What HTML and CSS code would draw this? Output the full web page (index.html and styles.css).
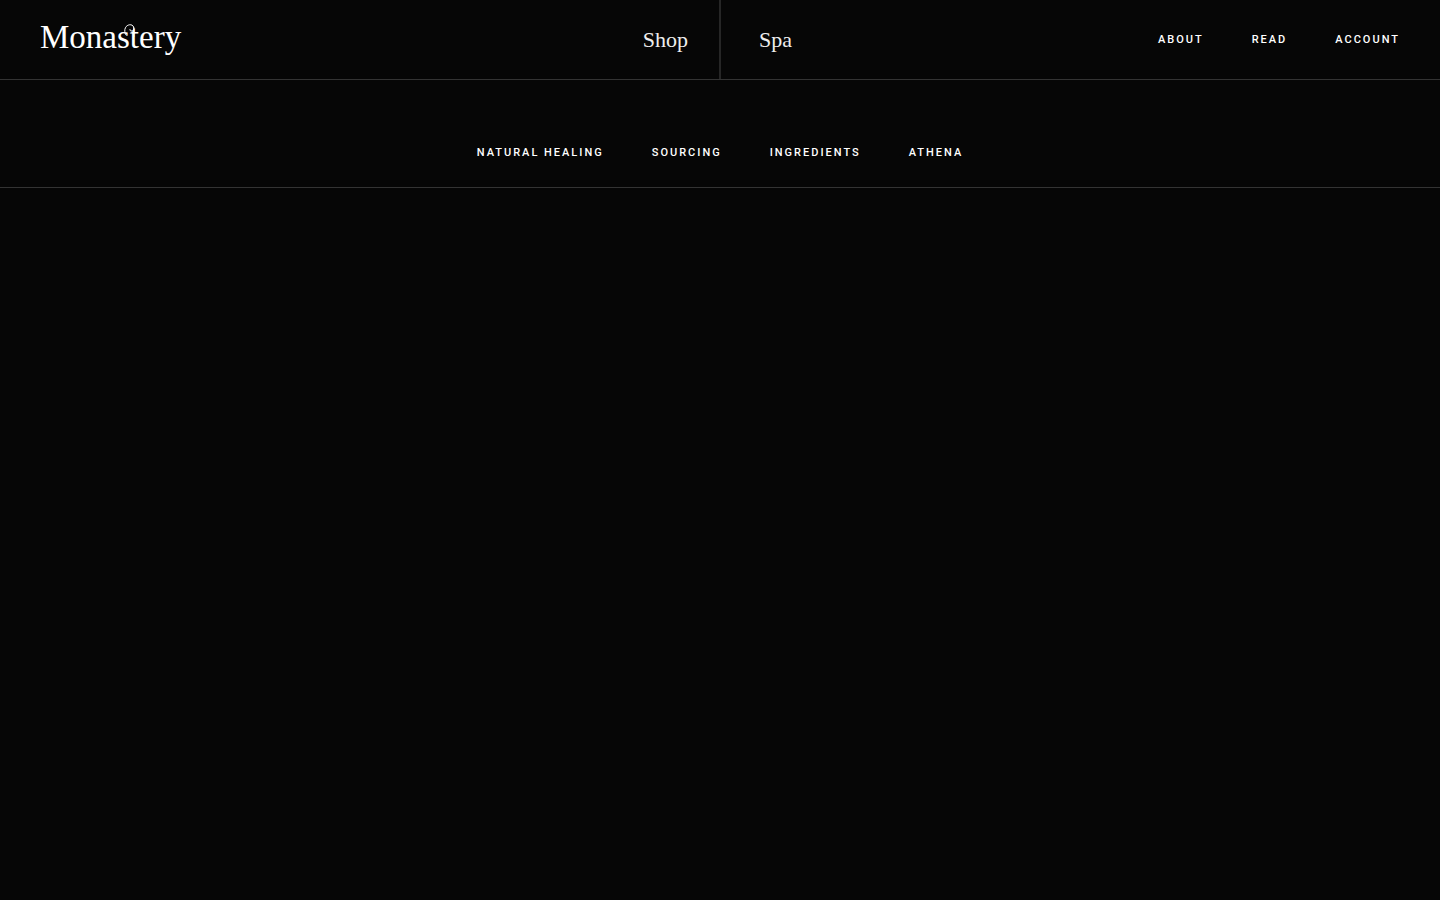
FILE: index.html
```html
<!DOCTYPE html>
<html lang="en">
<head>
    <meta charset="UTF-8">
    <meta name="viewport" content="width=device-width, initial-scale=1.0">
    <title>Monastery</title>
    <link rel="stylesheet" href="styles.css">
</head>
<body>
    <header class="header">
        <div class="half half-left">
            <a class="logo" href="#">Monastery
                <svg class="logo-loop" width="14" height="16" viewBox="0 0 14 16" aria-hidden="true">
                    <path d="M2.4 11.5C0.6 9.5 0.3 6 1.4 3.8C3 0.2 8.4 -0.4 9.6 3C10.4 5.4 9 7.4 7 7C5.8 6.7 5.6 5.5 6.4 5M9.8 3.4V13" fill="none" stroke="currentColor" stroke-width="1"/>
                </svg>
            </a>
            <a class="main-link" href="#">Shop</a>
        </div>
        <div class="half half-right">
            <a class="main-link" href="#">Spa</a>
            <nav class="links">
                <a href="#">ABOUT</a>
                <a href="#">READ</a>
                <a href="#">ACCOUNT</a>
            </nav>
        </div>
    </header>
    <nav class="links sub-nav">
        <a href="#">NATURAL HEALING</a>
        <a href="#">SOURCING</a>
        <a href="#">INGREDIENTS</a>
        <a href="#">ATHENA</a>
    </nav>
    <main></main>
</body>
</html>
```

FILE: styles.css
```css
body {
    margin: 0;
    background: #060606;
    color: #fff;
    font-family: "Liberation Serif", serif;
}
a {
    color: inherit;
    text-decoration: none;
}
.header {
    display: grid;
    grid-template-columns: 1fr 1fr;
    border-bottom: 1px solid #333;
}
.half {
    display: flex;
    justify-content: space-between;
    align-items: center;
    min-height: 79px;
}
.half-left {
    padding: 0 31px 0 40px;
    border-right: 1px solid #262626;
}
.half-right {
    padding: 0 40px 0 38px;
    border-left: 1px solid #262626;
}
.logo {
    position: relative;
    padding-bottom: 6px;
    font-size: 33px;
    line-height: 40px;
}
/* swash joining the s and the t */
.logo-loop {
    position: absolute;
    top: 7px;
    left: 84px;
}
.main-link {
    font-size: 22px;
    line-height: 32px;
    color: #eee;
}
.links {
    display: flex;
    gap: 48px;
    font-family: Roboto, sans-serif;
    font-size: 11px;
    font-weight: 500;
    line-height: 16px;
    letter-spacing: 2px;
}
.sub-nav {
    justify-content: center;
    padding: 65px 40px 26px;
    border-bottom: 1px solid #333;
}
```
